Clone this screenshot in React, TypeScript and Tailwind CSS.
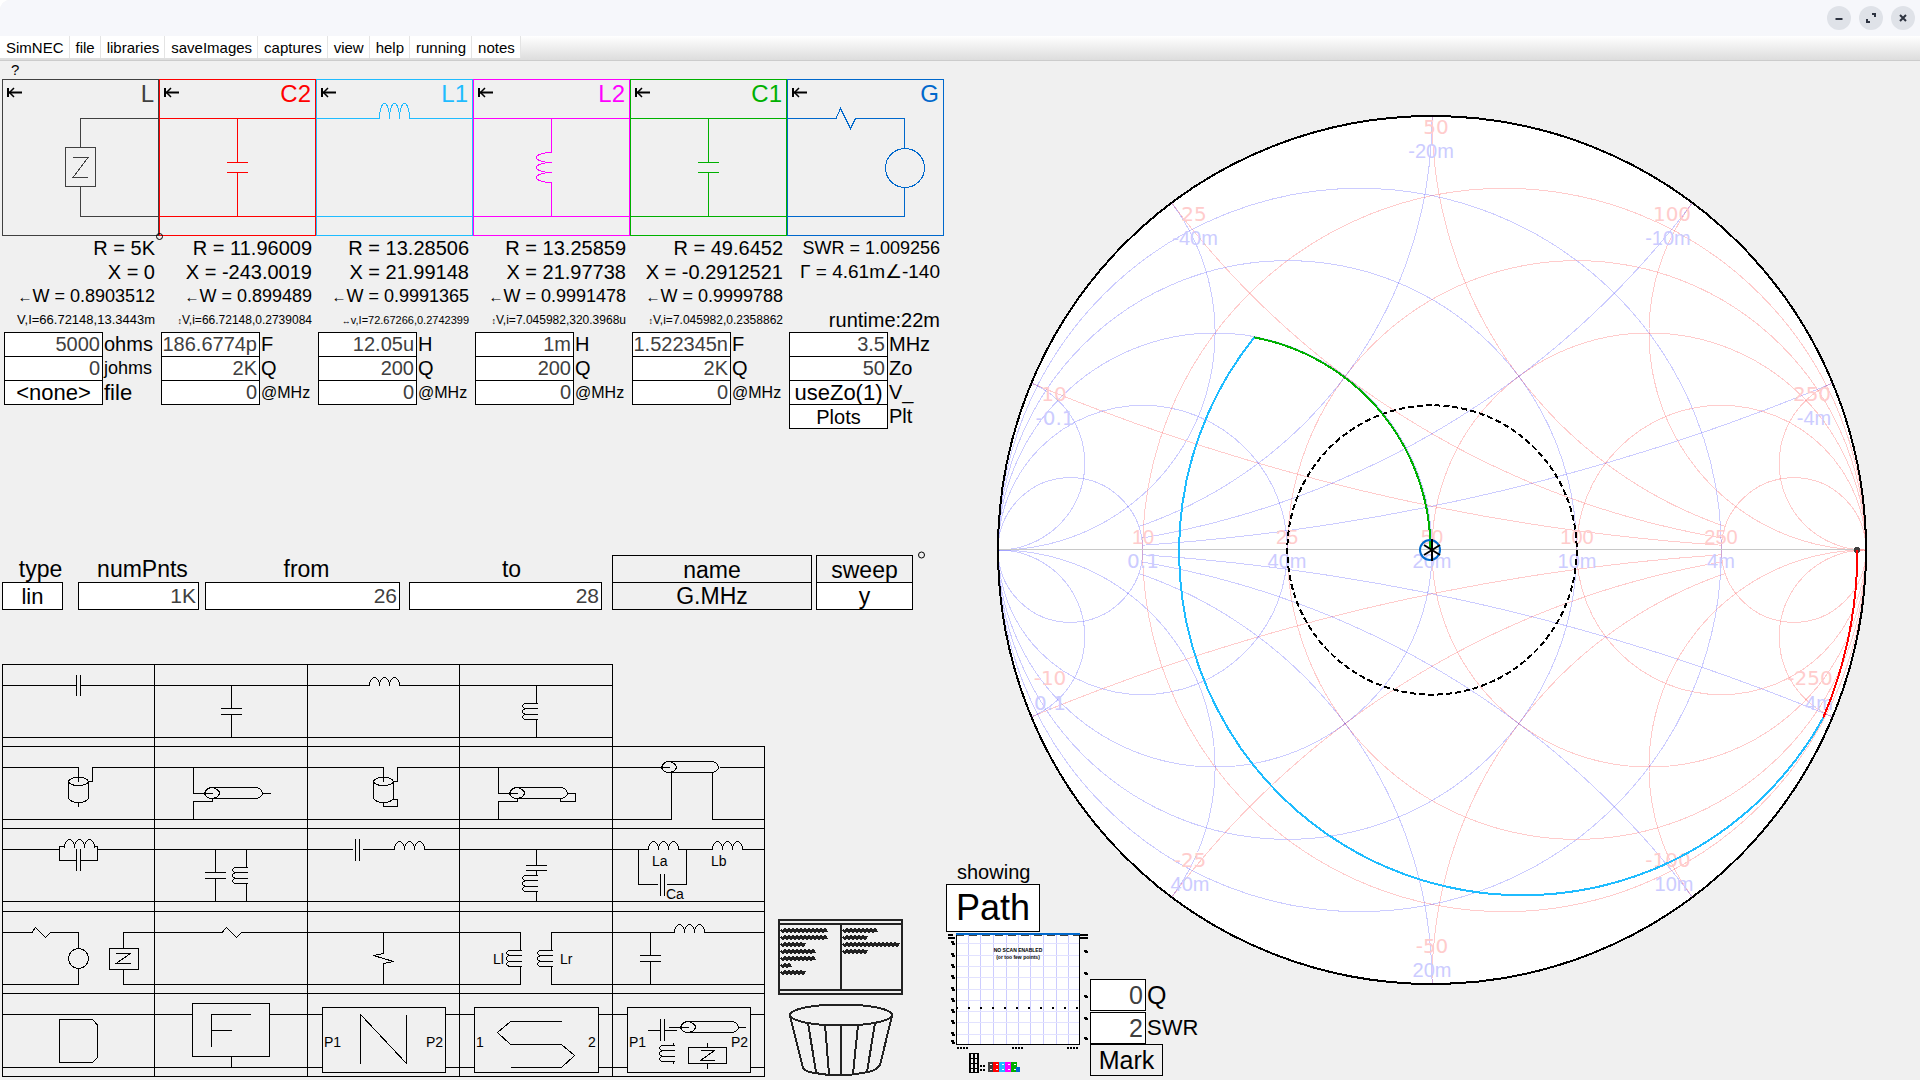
import React from "react";

/* ---------- path helpers ---------- */

const hCoil = (x: number, y: number, rise: number, step = 10) =>
  `M${x} ${y}` + `a${step / 2} ${rise} 0 0 1 ${step} 0`.repeat(3);

const vCoil = (x: number, y: number, depth: number, step: number) =>
  `M${x} ${y}` + `a${depth} ${step / 2} 0 0 0 0 ${step}`.repeat(3);

const turns = (x: number, y: number) =>
  [0, 5, 11]
    .map((d, i) => {
      const h = i === 1 ? 6 : 5;
      return `M${x + 1} ${y + d}h-10q-5 0 -5 ${h / 2}q0 ${h / 2} 5 ${h / 2}h10`;
    })
    .join("");

const tube = (x: number, y: number, len: number) =>
  `M${x - 8} ${y}q2 -6 8 -6h${len}q5 1 6 6q-1 4 -6 5h-${len}q-6 0 -8 -5M${x} ${y - 6}q7 2 7 6q-1 4 -7 5`;

/* ---------- circuit strip ---------- */

type Field = { value: string; label: string; kind?: "button"; size?: string; labelSize?: string };

type Block = {
  name: string;
  color: string;
  path: string;
  circle?: boolean;
  lines: string[];
  top: string[];
  tiny: string;
  tinySize: string;
  fields: Field[];
};

const RAILS = "M0 39.5H157M0 137.5H157";
const SHUNT_C = RAILS + "M78.5 39.5V83.5M68 83.5H89M68 93.5H89M78.5 93.5V137.5";

const blocks: Block[] = [
  {
    name: "L",
    color: "#404040",
    path: "M157 39.5H78.5V68.5M63.5 68.5H93.5V107.5H63.5ZM71 78.5H86L71 98.5H86M78.5 107.5V137.5H157",
    top: ["text-[20px]", "text-[20px]"],
    lines: ["R = 5K", "X = 0", "←W = 0.8903512"],
    tiny: "V,I=66.72148,13.3443m",
    tinySize: "text-[13px]",
    fields: [
      { value: "5000", label: "ohms" },
      { value: "0", label: "johms", labelSize: "text-[18px]" },
      { value: "<none>", label: "file", kind: "button", size: "text-[22px]", labelSize: "text-[22px]" },
    ],
  },
  {
    name: "C2",
    color: "#ff0000",
    path: SHUNT_C,
    top: ["text-[20px]", "text-[20px]"],
    lines: ["R = 11.96009", "X = -243.0019", "←W = 0.899489"],
    tiny: "↕V,i=66.72148,0.2739084",
    tinySize: "text-[12px]",
    fields: [
      { value: "186.6774p", label: "F" },
      { value: "2K", label: "Q" },
      { value: "0", label: "@MHz", labelSize: "text-[16px]" },
    ],
  },
  {
    name: "L1",
    color: "#1fbcff",
    path: "M0 39.5H63.5" + hCoil(63.5, 39.5, 15) + "M93.5 39.5H157M0 137.5H157",
    top: ["text-[20px]", "text-[20px]"],
    lines: ["R = 13.28506", "X = 21.99148", "←W = 0.9991365"],
    tiny: "↔v,I=72.67266,0.2742399",
    tinySize: "text-[11px]",
    fields: [
      { value: "12.05u", label: "H" },
      { value: "200", label: "Q" },
      { value: "0", label: "@MHz", labelSize: "text-[16px]" },
    ],
  },
  {
    name: "L2",
    color: "#ff00ff",
    path: RAILS + "M78.5 39.5V73.5" + vCoil(78.5, 73.5, 15, 10) + "M78.5 103.5V137.5",
    top: ["text-[20px]", "text-[20px]"],
    lines: ["R = 13.25859", "X = 21.97738", "←W = 0.9991478"],
    tiny: "↕V,i=7.045982,320.3968u",
    tinySize: "text-[12px]",
    fields: [
      { value: "1m", label: "H" },
      { value: "200", label: "Q" },
      { value: "0", label: "@MHz", labelSize: "text-[16px]" },
    ],
  },
  {
    name: "C1",
    color: "#00b000",
    path: SHUNT_C,
    top: ["text-[20px]", "text-[20px]"],
    lines: ["R = 49.6452", "X = -0.2912521", "←W = 0.9999788"],
    tiny: "↕V,i=7.045982,0.2358862",
    tinySize: "text-[12px]",
    fields: [
      { value: "1.522345n", label: "F" },
      { value: "2K", label: "Q" },
      { value: "0", label: "@MHz", labelSize: "text-[16px]" },
    ],
  },
  {
    name: "G",
    color: "#0068cc",
    path: "M0 39.5H49L53.5 29.5L63.5 49.5L68.5 39.5H117.5V69M117.5 109V137.5H0",
    circle: true,
    top: ["text-[18px]", "text-[19px]"],
    lines: ["SWR = 1.009256", "Γ = 4.61m∠-140", ""],
    tiny: "runtime:22m",
    tinySize: "text-[20px]",
    fields: [
      { value: "3.5", label: "MHz" },
      { value: "50", label: "Zo" },
      { value: "useZo(1)", label: "V_", kind: "button", size: "text-[22px]" },
      { value: "Plots", label: "Plt", kind: "button", size: "text-[20px]" },
    ],
  },
];

function CircuitBlock({ block }: { block: Block }) {
  return (
    <section className="w-[157px] shrink-0">
      <div className="relative h-[157px] border" style={{ borderColor: block.color }}>
        <svg width="155" height="155" viewBox="1 1 155 155" fill="none" stroke={block.color} shapeRendering="crispEdges" aria-hidden="true">
          <path d={block.path} />
          {block.circle && <circle cx="118" cy="89" r="19.5" />}
        </svg>
        <button type="button" aria-label={`Move ${block.name}`} className="absolute top-[7px] left-1 h-3 w-4">
          <svg width="16" height="12" viewBox="0 0 16 12" fill="none" stroke="#000" strokeWidth="2" aria-hidden="true">
            <path d="M1 1V10M2 5.5H15" />
            <path d="M7 1L2.5 5.5L7 10" strokeWidth="1.5" />
          </svg>
        </button>
        <h2 className="absolute top-[2px] right-1 text-[24px] leading-6" style={{ color: block.color }}>
          {block.name}
        </h2>
      </div>
      <div className="flex flex-col items-end pr-1">
        {block.lines.map((line, i) => (
          <p key={i} className={`h-6 leading-6 whitespace-nowrap ${i < 2 ? block.top[i] : "text-[18px]"}`}>
            {line.startsWith("←") ? (
              <>
                <span className="text-[15px]">←</span>
                {line.slice(1)}
              </>
            ) : (
              line
            )}
          </p>
        ))}
        <p className={`h-6 leading-6 whitespace-nowrap ${block.tinySize}`}>
          {/^[↕↔]/.test(block.tiny) ? (
            <>
              <span className="text-[9px]">{block.tiny[0]}</span>
              {block.tiny.slice(1)}
            </>
          ) : (
            block.tiny
          )}
        </p>
      </div>
      <div className="flex flex-col pt-px pl-[2px]">
        {block.fields.map((f, i) => {
          const id = `${block.name}-${i}`;
          return (
            <div key={id} className="-mt-px flex h-[25px] items-center">
              {f.kind === "button" ? (
                <button id={id} type="button" className={`h-[25px] w-[99px] border border-black bg-white leading-[22px] ${f.size}`}>
                  {f.value}
                </button>
              ) : (
                <input
                  id={id}
                  defaultValue={f.value}
                  className="h-[25px] w-[99px] border border-black bg-white pr-[2px] text-right text-[20px] leading-[23px] text-[#404040]"
                />
              )}
              <label htmlFor={id} className={`pl-px leading-[25px] ${f.labelSize ?? "text-[20px]"}`}>
                {f.label}
              </label>
            </div>
          );
        })}
      </div>
    </section>
  );
}

/* ---------- sweep row ---------- */

function SweepRow() {
  const box = "h-7 w-full border border-black text-[21px] leading-[25px]";
  const input = `${box} bg-white pr-[2px] text-right text-[#404040]`;
  const label = "block h-[27px] text-center text-[23px] leading-[28px]";
  return (
    <form className="flex items-start pl-[2px]">
      <div className="w-[61px]">
        <label htmlFor="sw-type" className={`${label} pl-4`}>type</label>
        <button id="sw-type" type="button" className={`${box} bg-white text-[22px]`}>lin</button>
      </div>
      <div className="ml-[15px] w-[121px]">
        <label htmlFor="sw-pnts" className={`${label} pl-2`}>numPnts</label>
        <input id="sw-pnts" defaultValue="1K" className={input} />
      </div>
      <div className="ml-[6px] w-[195px]">
        <label htmlFor="sw-from" className={`${label} pl-2`}>from</label>
        <input id="sw-from" defaultValue="26" className={input} />
      </div>
      <div className="ml-[9px] w-[193px]">
        <label htmlFor="sw-to" className={`${label} pl-3`}>to</label>
        <input id="sw-to" defaultValue="28" className={input} />
      </div>
      <div className="ml-[10px] w-[200px]">
        <label htmlFor="sw-name" className={`${label} border border-b-0 border-black`}>name</label>
        <button id="sw-name" type="button" className={`${box} text-[23px]`}>G.MHz</button>
      </div>
      <div className="ml-1 w-[97px]">
        <label htmlFor="sw-on" className={`${label} border border-b-0 border-black`}>sweep</label>
        <button id="sw-on" type="button" className={`${box} bg-white text-[23px]`}>y</button>
      </div>
      <span className="ml-[5px] size-[7px] -translate-y-1/2 rounded-full border border-black" />
    </form>
  );
}

/* ---------- component palette ---------- */

type Mark = { x: number; y: number; t: string };
type Part = { name: string; d: string; marks?: Mark[] };

const TOP = "M0 21.5H153";
const BOT = "M0 73.5H153";
const BOXWIRES = "M0 21.5H15.5M138.5 21.5H153M0 74.5H15.5M138.5 74.5H153";
const cylinder =
  "M0 21.5H76.5V35.5M153 21.5H90.5V35.5H86M66.5 35.5q1 -4 10 -4q9 0 10 4q-1 4 -10 4q-9 0 -10 -4V52.5q3 4 10 4q7 0 10 -4V35.5" + BOT;
const shuntLine = TOP + BOT + "M39.5 21.5V47.5H58.5M39.5 73.5V55.5H58.5V52.5" + tube(58.5, 47.5, 44);

const parts: Part[][] = [
  [
    { name: "series capacitor", d: "M0 21.5H74.5M74.5 11V32M78.5 11V32M78.5 21.5H153" + BOT },
    { name: "shunt capacitor", d: TOP + BOT + "M77.5 21.5V44.5M67 44.5H88M67 50.5H88M77.5 50.5V73.5" },
    { name: "series inductor", d: "M0 21.5H62.5M92.5 21.5H153" + hCoil(62.5, 21.5, 8) + BOT },
    { name: "shunt inductor", d: TOP + BOT + "M77.5 21.5V39.5M77.5 55.5V73.5" + turns(77.5, 39.5) },
  ],
  [
    { name: "series open stub", d: cylinder + "M76.5 56.5V61" },
    { name: "shunt open stub", d: shuntLine + "M108.5 47.5H117" },
    { name: "series shorted stub", d: cylinder + "M76.5 56.5V60.5H90.5V53.5H86" },
    { name: "shunt shorted stub", d: shuntLine + "M108.5 47.5H116.5V55.5H101.5V52.5" },
    { name: "transmission line", d: "M0 21.5H57.5M107.5 21.5H153M59.5 27V73.5H0M100.5 27V73.5H153" + tube(57.5, 21.5, 43) },
  ],
  [
    {
      name: "series parallel LC",
      d: "M0 21.5H57.5M95.5 21.5H153M62.5 18.5H57.5V32.5H74.5M78.5 32.5H95.5V18.5H92.5M74.5 21V43M78.5 21V43" + hCoil(62.5, 19.5, 8) + BOT,
    },
    {
      name: "shunt parallel LC",
      d: TOP + BOT + "M61.5 21.5V44.5M51 44.5H72M51 50.5H72M61.5 50.5V73.5M92.5 21.5V39.5M92.5 55.5V73.5" + turns(92.5, 39.5),
    },
    { name: "series LC", d: "M0 21.5H45.5M48.5 11V33M52.5 11V33M55.5 21.5H87.5M116.5 21.5H153" + hCoil(87.5, 21.5, 8) + BOT },
    { name: "shunt series LC", d: TOP + BOT + "M77.5 21.5V37.5M67 37.5H88M67 42.5H88M77.5 42.5V47.5M77.5 63.5V73.5" + turns(77.5, 47.5) },
    {
      name: "tapped LC",
      d:
        "M0 21.5H36.5M65.5 21.5H100.5M129.5 21.5H153M26.5 21.5V56.5H46M55 56.5H74.5V21.5M48.5 46V68M52.5 46V68" +
        hCoil(36.5, 21.5, 8) + hCoil(100.5, 21.5, 8) + BOT,
      marks: [{ x: 40, y: 38, t: "La" }, { x: 99, y: 38, t: "Lb" }, { x: 54, y: 71, t: "Ca" }],
    },
  ],
  [
    {
      name: "generator and load",
      d:
        "M0 21.5H30L33.5 16.5L43.5 26.5L48.5 21.5H76.5V37.5M66.5 47.5a10 10 0 1 0 20 0a10 10 0 1 0 -20 0M76.5 57.5V73.5H0" +
        "M153 21.5H121.5V37.5M107.5 37.5H136.5V58.5H107.5ZM114 42.5H128.5L114 52.5H128.5M121.5 58.5V73.5H153",
    },
    { name: "series resistor", d: "M0 21.5H68L72.5 16.5L82.5 26.5L87.5 21.5H153" + BOT },
    { name: "shunt resistor", d: TOP + BOT + "M76.5 21.5V42.5L66.5 44.5L86.5 50.5L76.5 52.5V73.5" },
    {
      name: "transformer",
      d: "M0 21.5H61.5V39.5M61.5 55.5V73.5H0M153 21.5H92.5V39.5M92.5 55.5V73.5H153" + turns(61.5, 39.5) + turns(92.5, 39.5),
      marks: [{ x: 34, y: 53, t: "Ll" }, { x: 101, y: 53, t: "Lr" }],
    },
    {
      name: "L network",
      d: "M0 21.5H62.5M92.5 21.5H153M38.5 21.5V44.5M28 44.5H49M28 50.5H49M38.5 50.5V73.5" + hCoil(62.5, 21.5, 8) + BOT,
    },
  ],
  [
    { name: "D block", d: TOP + "M0 74.5H153M57.5 26.5H90.5L95.5 32V64.5L90.5 69.5H57.5Z" },
    { name: "F block", d: "M0 21.5H38.5M115.5 21.5H153M0 74.5H153M38.5 10.5H115.5V63.5H38.5ZM77.5 63.5V74M57.5 54V21.5H96.5M57.5 37.5H77.5" },
    {
      name: "N block",
      d: BOXWIRES + "M15.5 14.5H138.5V79.5H15.5ZM53.5 71V21.5L99.5 70.5V21.5",
      marks: [{ x: 17, y: 54, t: "P1" }, { x: 119, y: 54, t: "P2" }],
    },
    {
      name: "S block",
      d: BOXWIRES + "M15.5 14.5H139.5V79.5H15.5ZM102.5 28.5H51.5L38.5 39.5L51.5 51.5H102.5L115.5 62.5L102.5 74.5H51.5",
      marks: [{ x: 17, y: 54, t: "1" }, { x: 129, y: 54, t: "2" }],
    },
    {
      name: "circuit block",
      d:
        BOXWIRES +
        "M15.5 14.5H138.5V79.5H15.5ZM36 37.5H48.5M48.5 26V48M52.5 26V48M52.5 37.5H65M57 34.5H76.5M126.5 34.5H134" +
        tube(76.5, 34.5, 44) + turns(61.5, 52.5) +
        "M61.5 50V53M61.5 68V71M76.5 54.5H114.5V70.5H76.5ZM88.5 57.5H102.5L88.5 67.5H102.5M95.5 50V54.5M95.5 70.5V76",
      marks: [{ x: 17, y: 54, t: "P1" }, { x: 119, y: 54, t: "P2" }],
    },
  ],
];

const cellWidths = ["w-[152px]", "w-[153px]", "w-[152px]", "w-[153px] last:w-[154px]", "w-[153px]"];
const rowHeights = ["h-[82px]", "h-[82px]", "h-[83px]", "h-[82px]", "h-[84px] border-b"];

function Palette() {
  return (
    <div className="flex flex-col">
      {parts.map((row, r) => (
        <div key={r} className="flex">
          {row.map((p, c) => (
            <button
              key={p.name}
              type="button"
              aria-label={p.name}
              className={`border-t border-l border-black last:border-r ${cellWidths[c]} ${rowHeights[r]}`}
            >
              <svg className="block size-full" fill="none" stroke="#000" shapeRendering="crispEdges" aria-hidden="true">
                <g transform="translate(-1 -1)">
                  <path d={p.d} />
                  {p.marks?.map((m) => (
                    <text key={m.t} x={m.x} y={m.y} fill="#000" stroke="none" fontSize="14">
                      {m.t}
                    </text>
                  ))}
                </g>
              </svg>
            </button>
          ))}
        </div>
      ))}
    </div>
  );
}

const squiggle = (x: number, y: number, to: number) => {
  let d = `M${x} ${y}`;
  for (let i = 1; x + i * 2 <= to; i++) d += `L${x + i * 2} ${y + (i % 2 ? 2 : -1)}`;
  return d;
};

function NotesIcon() {
  const left = [50, 50, 28, 38, 38, 14, 28];
  const right = [99, 89, 122, 89];
  return (
    <svg width="125" height="76" viewBox="0 0 125 76" fill="none" stroke="#222" strokeWidth="2" shapeRendering="crispEdges" aria-hidden="true">
      <path d="M1 1H124V75H1ZM1 5H124M1 71H124M63 5V71" />
      <path
        strokeWidth="2"
        d={left.map((w, i) => squiggle(3, 11 + i * 7, w)).join("") + right.map((w, i) => squiggle(65, 11 + i * 7, w)).join("")}
      />
    </svg>
  );
}

function BinIcon() {
  return (
    <svg width="106" height="74" viewBox="0 0 106 74" fill="none" stroke="#222" strokeWidth="2" shapeRendering="crispEdges" aria-hidden="true">
      <ellipse cx="53" cy="12" rx="51" ry="10.5" />
      <path d="M2 13L15 65Q18 69 27 70Q53 75 80 69Q89 67 92 62L104 13M20 20L28 69M37 22L41 71M53 22V72M70 22L65 71M87 20L79 69" />
    </svg>
  );
}

/* ---------- Smith chart ---------- */

type C = [number, number];
const R = 434;

const div = (a: C, b: C): C => {
  const m = b[0] * b[0] + b[1] * b[1];
  return [(a[0] * b[0] + a[1] * b[1]) / m, (a[1] * b[0] - a[0] * b[1]) / m];
};
const gamma = ([r, x]: C): C => div([r - 1, x], [r + 1, x]);
const toPoints = (pts: C[]) => pts.map(([u, v]) => `${(u * R).toFixed(1)},${(-v * R).toFixed(1)}`).join(" ");

const LEVELS = [0.2, 0.5, 1, 2, 5];

const reactanceArc = (x: number) => {
  const pts: C[] = [];
  for (let i = 0; i <= 80; i++) {
    const t = i / 80;
    const r = x <= 1 ? 5 * t * t : (x * t) / (1.0001 - t);
    pts.push(gamma([r, x]));
  }
  return toPoints(pts);
};

const trace = (from: C, to: C, admittance: boolean) => {
  const pts: C[] = [];
  for (let i = 0; i <= 120; i++) {
    const t = i / 120;
    const z: C = [from[0] + (to[0] - from[0]) * t, from[1] + (to[1] - from[1]) * t];
    const g = gamma(z);
    pts.push(admittance ? [-g[0], -g[1]] : g);
  }
  return toPoints(pts);
};

const unit: C = [50, 0];
const z = (r: number, x: number): C => div([r, x], unit);
const y = (r: number, x: number): C => div(unit, [r, x]);

function Grid() {
  return (
    <g>
      {LEVELS.map((r) => (
        <circle key={r} cx={(R * r) / (1 + r)} cy="0" r={R / (1 + r)} />
      ))}
      {LEVELS.map((x) => (
        <React.Fragment key={x}>
          <polyline points={reactanceArc(x)} />
          <polyline points={reactanceArc(x)} transform="scale(1 -1)" />
        </React.Fragment>
      ))}
    </g>
  );
}

type Label = { x: number; y: number; t: string; blue?: boolean; wide?: boolean };

const chartLabels: Label[] = [
  { x: 4, y: -416, t: "50", wide: true },
  { x: -1, y: -392, t: "-20m", blue: true },
  { x: -238, y: -329, t: "25", wide: true },
  { x: -237, y: -305, t: "-40m", blue: true },
  { x: -378, y: -149, t: "10", wide: true },
  { x: -377, y: -125, t: "-0.1", blue: true, wide: true },
  { x: 240, y: -329, t: "100", wide: true },
  { x: 236, y: -305, t: "-10m", blue: true },
  { x: 380, y: -149, t: "250", wide: true },
  { x: 382, y: -125, t: "-4m", blue: true },
  { x: -382, y: 135, t: "-10", wide: true },
  { x: -382, y: 160, t: "0.1", blue: true, wide: true },
  { x: -242, y: 317, t: "-25", wide: true },
  { x: -242, y: 341, t: "40m", blue: true },
  { x: 0, y: 403, t: "-50", wide: true },
  { x: 0, y: 427, t: "20m", blue: true },
  { x: 236, y: 317, t: "-100", wide: true },
  { x: 242, y: 341, t: "10m", blue: true },
  { x: 378, y: 135, t: "-250", wide: true },
  { x: 387, y: 160, t: "4m", blue: true },
  { x: -289, y: -6, t: "10" },
  { x: -289, y: 18, t: "0.1", blue: true, wide: true },
  { x: -145, y: -6, t: "25" },
  { x: -145, y: 18, t: "40m", blue: true },
  { x: 0, y: -6, t: "50" },
  { x: 0, y: 18, t: "20m", blue: true },
  { x: 145, y: -6, t: "100" },
  { x: 145, y: 18, t: "10m", blue: true },
  { x: 289, y: -6, t: "250" },
  { x: 289, y: 18, t: "4m", blue: true },
];

function SmithChart() {
  return (
    <svg viewBox="-436 -436 872 872" className="w-full max-w-[872px]" fill="none" role="img" aria-label="Smith chart">
      <circle r={R} fill="#fff" />
      <g shapeRendering="crispEdges">
        <g stroke="#ff0000" strokeOpacity="0.2">
          <Grid />
        </g>
        <g stroke="#0000ff" strokeOpacity="0.2" transform="scale(-1 1)">
          <Grid />
        </g>
        <path d={`M${-R} -.5H425`} stroke="#c8c8c8" />
      </g>
      {chartLabels.map((l, i) => (
        <text
          key={i}
          x={l.x}
          y={l.y}
          textAnchor="middle"
          fill={l.blue ? "#ccccff" : "#ffcccc"}
          fontSize="20"
          fontFamily={l.wide ? '"DejaVu Sans", sans-serif' : '"Liberation Sans", sans-serif'}
        >
          {l.t}
        </text>
      ))}
      <g shapeRendering="crispEdges" strokeWidth="2">
        <circle r={R} stroke="#000" />
        <circle r={R / 3} stroke="#000" strokeDasharray="6 3" />
        <circle cx="425" cy="0" r="3" fill="#404040" />
        <polyline points={trace(y(5000, 0), y(11.96, -243), true)} stroke="#ff0000" />
        <polyline points={trace(z(11.96, -243), z(13.285, 21.99), false)} stroke="#1fbcff" />
        <polyline points={trace(y(13.2586, 21.977), y(49.645, -0.29), true)} stroke="#00b000" />
      </g>
      <circle cx="-2" cy="0" r="10" stroke="#0068cc" strokeWidth="2" />
      <path d="M0 -11V11M-8 -5L8 5M-8 5L8 -5" stroke="#000" strokeWidth="2" />
    </svg>
  );
}

/* ---------- mini plot ---------- */

function MiniPlot() {
  const vx = [22, 34, 47, 60, 72, 84, 97, 110, 122];
  const hy = [12, 24, 35, 46, 58, 69, 80, 91, 103];
  const legend = ["#404040", "#ff0000", "#1fbcff", "#ff00ff", "#00b000"];
  return (
    <svg width="144" height="144" viewBox="-1 0 144 144" shapeRendering="crispEdges" role="img" aria-label="Scan preview">
      <rect x="9" y="1" width="124" height="112" fill="#fff" />
      <path d={vx.map((x) => `M${x - 0.5} 3V112`).join("")} stroke="#ccccff" />
      <path d={hy.map((v) => `M9 ${v - 0.5}H132`).join("")} stroke="#e2e2ff" />
      <path d="M9 1.5H133" stroke="#0068cc" strokeWidth="2" />
      <path d="M9 3.5H133" stroke="#404040" strokeDasharray="8 5" />
      <path d="M9.5 3V112.5H132.5V3" fill="none" stroke="#000" />
      <path d="M1 2.5H6M133 2.5H141M1 5.5H8M133 5.5H141" stroke="#000" strokeWidth="2" />
      {hy.concat([111]).map((v, i) => (
        <React.Fragment key={v}>
          <path d={`M4 ${v - 2}h2v2h2`} stroke="#000" strokeWidth="1.5" fill="none" />
          {i % 2 === 1 && <path d={`M137 ${v - 5}h2v1h2`} stroke="#000" strokeWidth="1.5" fill="none" />}
        </React.Fragment>
      ))}
      {Array.from({ length: 11 }, (_, i) => (
        <rect key={i} x={9 + i * 12} y="75" width="2" height="2" fill="#000" />
      ))}
      <path d="M10 115.5H22M65 115.5H77M120 115.5H132" stroke="#000" strokeWidth="2" strokeDasharray="2 1" />
      <g fontSize="5" fontWeight="700" textAnchor="middle" fill="#000">
        <text x="71" y="20">NO SCAN ENABLED</text>
        <text x="71" y="27">(or too few points)</text>
      </g>
      <path d="M23 121.500h8v19h-8zM27 122V140M23 126.500h8M23 131.500h8M23 136.500h8" fill="none" stroke="#000" strokeWidth="1.5" />
      <path d="M33 133.500h6M33 137.500h6" stroke="#000" strokeWidth="2" strokeDasharray="2 1" />
      {legend.map((c, i) => (
        <React.Fragment key={c}>
          <rect x={41 + i * 6 - (i === 0 ? 0 : 1)} y="130" width="6" height="10" fill={c} />
          <path d={`M${43 + i * 6} 132.500h2M${43 + i * 6} 137.500h2`} stroke="#fff" />
        </React.Fragment>
      ))}
      <rect x="69" y="135" width="4" height="5" fill="#0068cc" />
    </svg>
  );
}

/* ---------- window ---------- */

const menus = ["SimNEC", "file", "libraries", "saveImages", "captures", "view", "help", "running", "notes"];
const controls = [
  { name: "Minimize", d: "M3.500 8H10.500" },
  { name: "Restore", d: "M8 3H11V6M6 11H3V8" },
  { name: "Close", d: "M4 4L10 10M10 4L4 10" },
];

export default function App() {
  return (
    <div className='flex min-h-screen flex-col overflow-hidden rounded-tl-[10px] bg-[#f0f0f0] font-["Liberation_Sans",Arial,sans-serif] text-black'>
      <header className="flex h-9 items-center justify-end gap-2 bg-[#f6f7fb] pr-[5px]">
        {controls.map((c) => (
          <button key={c.name} type="button" aria-label={c.name} className="flex size-6 items-center justify-center rounded-full bg-[#dfe2e8]">
            <svg width="14" height="14" viewBox="0 0 14 14" fill="none" stroke="#2d3340" strokeWidth="2" aria-hidden="true">
              <path d={c.d} />
            </svg>
          </button>
        ))}
      </header>
      <nav className="flex h-[25px] items-start border-b border-[#cccccc] bg-linear-to-b from-white to-[#dddddd]">
        {menus.map((m) => (
          <button key={m} type="button" className="h-[22px] border-r border-[#e4e4e4] bg-white pr-[5px] pl-[6px] text-[15px] leading-[24px]">
            {m}
          </button>
        ))}
      </nav>
      <main className="flex flex-1">
        <div className="flex w-[944px] shrink-0 flex-col">
          <p className="h-[18px] pl-[11px] text-[15px] leading-[17px]">?</p>
          <div className="relative flex pl-[2px]">
            {blocks.map((b) => (
              <CircuitBlock key={b.name} block={b} />
            ))}
            <span className="absolute top-[154px] left-[156px] size-[7px] rounded-full border border-black" />
          </div>
          <div className="mt-[126px]">
            <SweepRow />
          </div>
          <div className="mt-[53px] flex items-end gap-[13px] pl-[2px]">
            <Palette />
            <div className="flex flex-col items-center gap-2">
              <NotesIcon />
              <BinIcon />
            </div>
          </div>
        </div>
        <div className="grid flex-1">
          <div className="col-start-1 row-start-1 flex justify-center self-start pt-[53px]">
            <SmithChart />
          </div>
          <div className="z-10 col-start-1 row-start-1 flex items-end self-end justify-self-start pb-1 pl-[2px]">
            <div className="flex flex-col items-start">
              <label htmlFor="showing" className="pl-[11px] text-[20px] leading-6">showing</label>
              <button id="showing" type="button" className="h-12 w-[94px] border border-black bg-white text-[36px] leading-[46px]">
                Path
              </button>
              <MiniPlot />
            </div>
            <div className="flex flex-col items-start">
              <div className="flex items-center">
                <input id="q" defaultValue="0" className="h-8 w-14 border border-black bg-white pr-[2px] text-right text-[25px] leading-[30px] text-[#404040]" />
                <label htmlFor="q" className="pl-px text-[25px] leading-8">Q</label>
              </div>
              <div className="flex items-center pt-px">
                <input id="swr" defaultValue="2" className="h-8 w-14 border border-black bg-white pr-[2px] text-right text-[25px] leading-[30px] text-[#404040]" />
                <label htmlFor="swr" className="pl-px text-[22px] leading-8">SWR</label>
              </div>
              <button type="button" className="h-8 w-[73px] border border-black bg-[#f0f0f0] text-[25px] leading-[30px]">
                Mark
              </button>
            </div>
          </div>
        </div>
      </main>
    </div>
  );
}
